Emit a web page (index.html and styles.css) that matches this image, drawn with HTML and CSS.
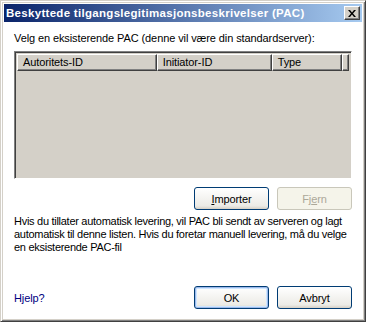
FILE: index.html
```html
<!DOCTYPE html>
<html lang="no">
<head>
    <meta charset="UTF-8">
    <title>Beskyttede tilgangslegitimasjonsbeskrivelser (PAC)</title>
    <link rel="stylesheet" href="styles.css">
</head>
<body>
    <div class="dialog">
        <div class="title-bar">
            <span class="title-text">Beskyttede tilgangslegitimasjonsbeskrivelser (PAC)</span>
            <button class="close-btn" aria-label="Lukk">
                <svg width="8" height="7" viewBox="0 0 8 7">
                    <path d="M0 0h2l2 2.5L6 0h2L5 3.5 8 7H6L4 4.5 2 7H0l3-3.5z" fill="#000"/>
                </svg>
            </button>
        </div>
        <div class="content">
            <p class="intro">Velg en eksisterende PAC (denne vil være din standardserver):</p>
            <div class="list-view">
                <div class="list-header">
                    <div class="col col-auth">Autoritets-ID</div>
                    <div class="col col-init">Initiator-ID</div>
                    <div class="col col-type">Type</div>
                    <div class="col col-rest"></div>
                </div>
            </div>
            <div class="button-row">
                <button class="btn"><u>I</u>mporter</button>
                <button class="btn" disabled>Fj<u>e</u>rn</button>
            </div>
            <p class="info">Hvis du tillater automatisk levering, vil PAC bli sendt av serveren og lagt automatisk til denne listen. Hvis du foretar manuell levering, må du velge en eksisterende PAC-fil</p>
            <div class="footer">
                <a class="help-link" href="#">Hjelp?</a>
                <div class="footer-buttons">
                    <button class="btn btn-default">OK</button>
                    <button class="btn">Avbryt</button>
                </div>
            </div>
        </div>
    </div>
</body>
</html>
```

FILE: styles.css
```css
/* Dialogboks i klassisk Windows-stil */
html, body {
    margin: 0;
    padding: 0;
}
body {
    width: 366px;
    height: 322px;
    overflow: hidden;
    font-family: "Liberation Sans", sans-serif;
    font-size: 11px;
    color: #000;
    background-color: #fff;
}
.dialog {
    width: 366px;
    height: 322px;
    box-sizing: border-box;
    display: flex;
    flex-direction: column;
    border-top: 1px solid #d4d0c8;
    border-left: 1px solid #d4d0c8;
    border-right: 1px solid #404040;
    border-bottom: 1px solid #404040;
    box-shadow: inset 1px 1px 0 #fff, inset -1px -1px 0 #808080, inset 2px 2px 0 #d4d0c8, inset -2px -2px 0 #d4d0c8;
    padding: 3px;
}
.title-bar {
    height: 18px;
    display: flex;
    align-items: center;
    justify-content: space-between;
    padding: 0 2px 0 2px;
    background: linear-gradient(to right, #0a246a, #a6caf0);
}
.title-text {
    color: #fff;
    font-weight: bold;
    font-size: 11.5px;
    letter-spacing: 0.3px;
}
.close-btn {
    width: 16px;
    height: 14px;
    padding: 0;
    background-color: #d4d0c8;
    border: 1px solid;
    border-color: #fff #404040 #404040 #fff;
    box-shadow: inset -1px -1px 0 #808080;
    display: flex;
    align-items: center;
    justify-content: center;
}
.content {
    flex: 1;
    display: flex;
    flex-direction: column;
    padding: 9px 10px 9px 10px;
    letter-spacing: -0.1px;
}
.intro {
    margin: 1px 0 6px 0;
    line-height: 13px;
}
.list-view {
    height: 128px;
    box-sizing: border-box;
    background-color: #d4d0c8;
    border: 1px solid;
    border-color: #808080 #fff #fff #808080;
    box-shadow: inset 1px 1px 0 #404040, inset -1px -1px 0 #d4d0c8;
    padding: 2px;
}
.list-header {
    display: flex;
    height: 17px;
}
.col {
    box-sizing: border-box;
    height: 17px;
    line-height: 15px;
    padding-left: 5px;
    background-color: #d4d0c8;
    border: 1px solid;
    border-color: #fff #404040 #404040 #fff;
    box-shadow: inset -1px -1px 0 #808080;
}
.col-auth { width: 141px; }
.col-init { width: 116px; }
.col-type { width: 71px; }
.col-rest { width: 6px; }
.button-row {
    display: flex;
    justify-content: flex-end;
    gap: 8px;
    margin-top: 8px;
}
.btn {
    width: 75px;
    height: 23px;
    box-sizing: border-box;
    font-family: "Liberation Sans", sans-serif;
    font-size: 11px;
    letter-spacing: -0.1px;
    color: #000;
    background: linear-gradient(#fff, #ecebe6 85%, #d6d0c5);
    border: 1px solid #003c74;
    border-radius: 3px;
    padding: 0;
}
.btn:disabled {
    color: #aca899;
    border-color: #c9c7ba;
    background: #f5f4ea;
}
.btn-default {
    box-shadow: inset 0 0 0 1px #9db9eb, inset 0 0 0 2px #cee7ff;
}
.info {
    margin: 5px 0 0 0;
    line-height: 13px;
    letter-spacing: -0.28px;
}
.footer {
    margin-top: auto;
    display: flex;
    align-items: center;
    justify-content: space-between;
}
.help-link {
    color: #00007f;
    text-decoration: none;
}
.footer-buttons {
    display: flex;
    gap: 8px;
}
```
